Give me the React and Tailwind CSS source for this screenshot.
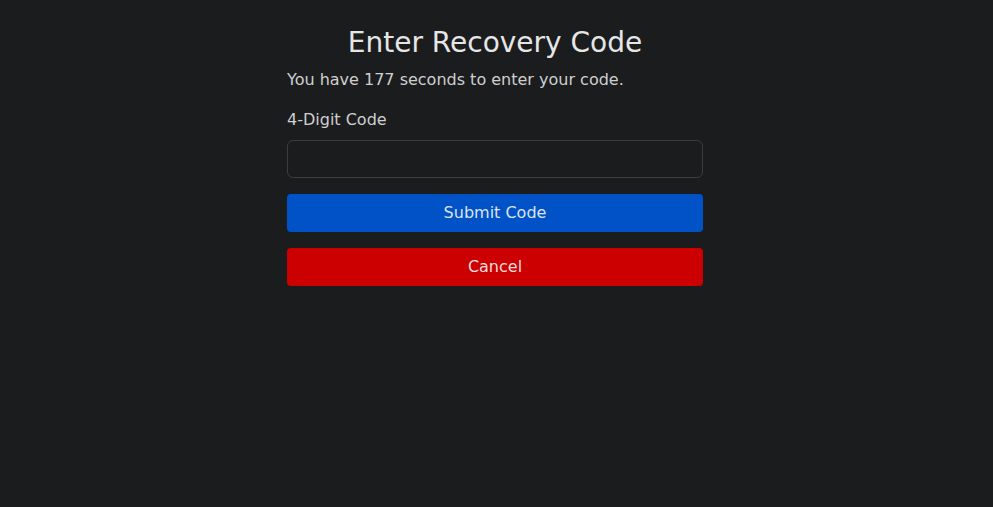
export default function App() {
  return (
    <div className="min-h-[507px] w-full bg-[#1b1c1e] text-[#dcdcdc]" style={{ fontFamily: '"DejaVu Sans", sans-serif' }}>
      <div className="ml-[287px] w-[416px] pt-[25px]">
        <h1 className="text-center text-[28px] leading-[36px] text-[#e6e6e6]">Enter Recovery Code</h1>
        <p className="mt-[7px] text-[16px] leading-[24px] text-[#cfcfcf]">You have 177 seconds to enter your code.</p>
        <label className="mt-[16px] block text-[16px] leading-[24px] text-[#cfcfcf]">4-Digit Code</label>
        <input className="mt-[8px] block h-[38px] w-full rounded-[6px] border border-[#3c3d40] bg-[#1b1c1e] px-3 text-[16px] text-[#ddd] outline-none" />
        <button className="mt-[16px] block h-[38px] w-full rounded-[4px] bg-[#0052c6] text-[16px] text-[#dde3ee]">Submit Code</button>
        <button className="mt-[16px] block h-[38px] w-full rounded-[4px] bg-[#cc0000] text-[16px] text-[#eedddd]">Cancel</button>
      </div>
    </div>
  );
}
